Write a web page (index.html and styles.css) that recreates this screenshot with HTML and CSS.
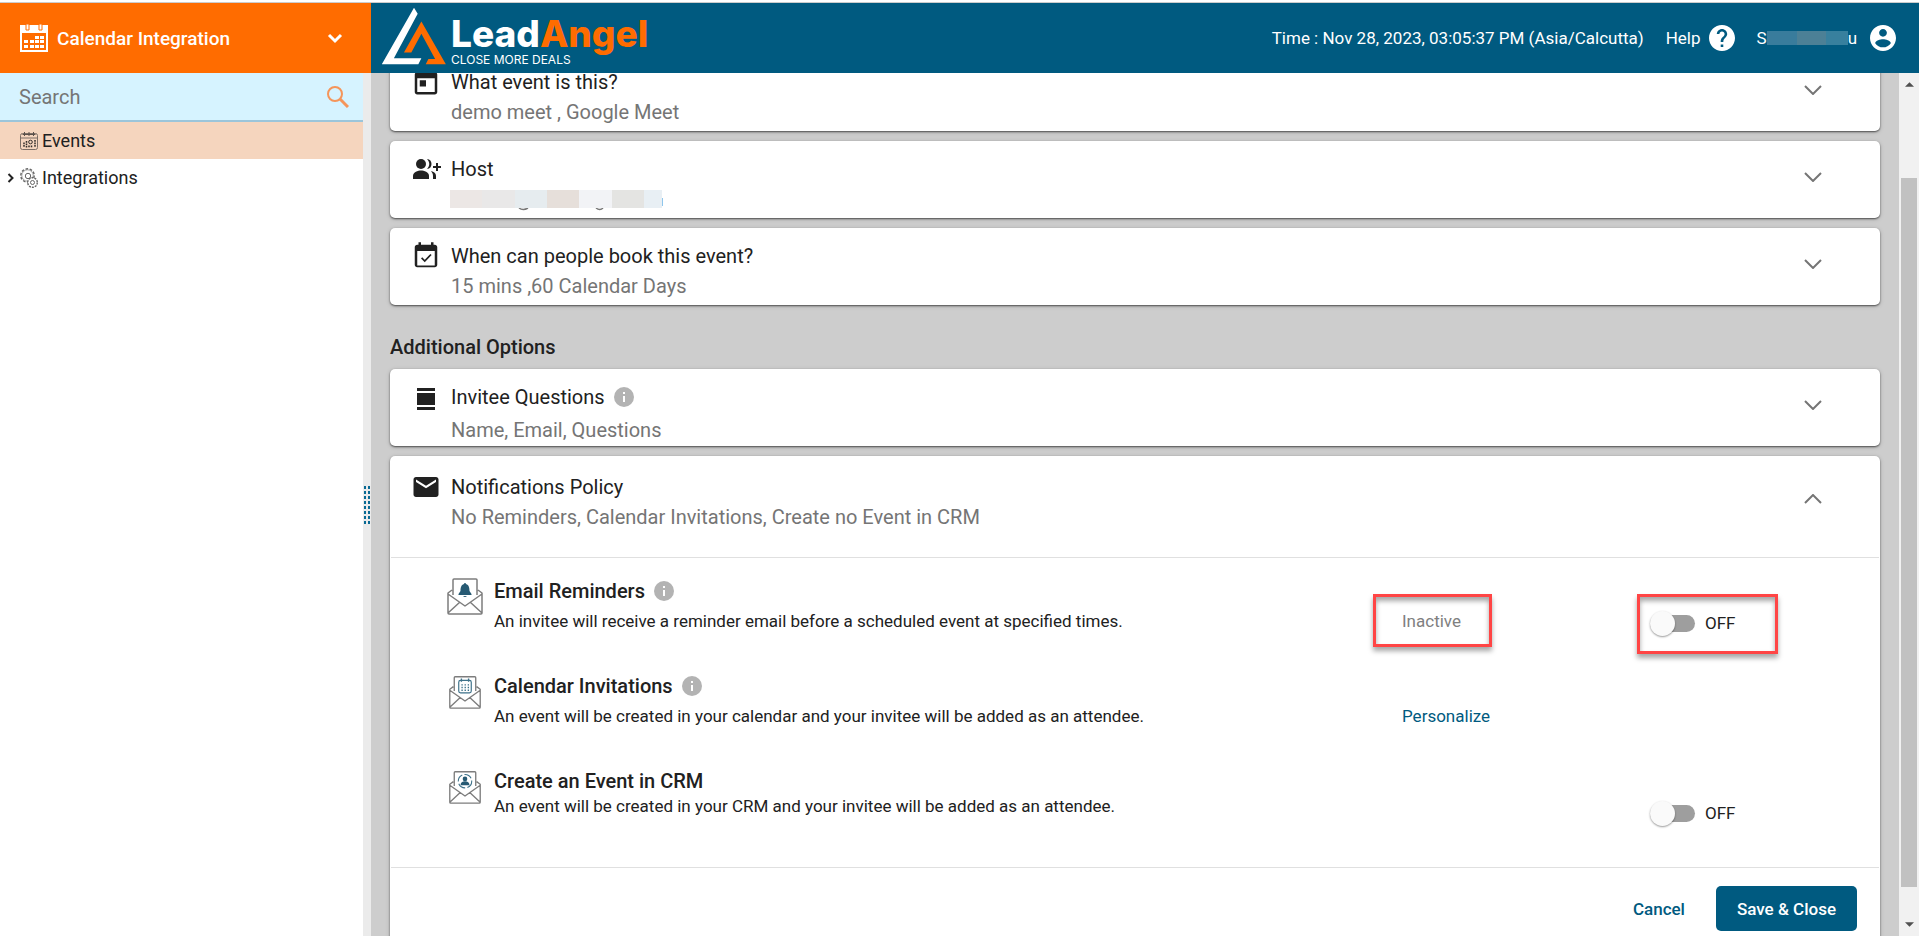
FILE: index.html
```html
<!DOCTYPE html>
<html lang="en">
<head>
<meta charset="utf-8">
<title>LeadAngel - Calendar Integration</title>
<link rel="stylesheet" href="styles.css">
</head>
<body>
<svg class="defs" aria-hidden="true">
  <symbol id="down" viewBox="0 0 18 10"><path d="M1 1l8 8 8-8" fill="none" stroke="currentColor" stroke-width="2"/></symbol>
  <symbol id="info" viewBox="0 0 20 20"><circle cx="10" cy="10" r="10" fill="#b3b3b3"/><path d="M9 5h2v2H9zM9 9h2v6H9z" fill="#fff"/></symbol>
  <symbol id="envelope" viewBox="0 0 38 38"><g fill="none" stroke="#7d7d7d" stroke-width="1.5" stroke-linejoin="round"><path d="M7 18V3q0-1 1-1h22q1 0 1 1v15M6 13l-4 3v20q0 1 1 1h32q1 0 1-1V16l-4-3M2 17l17 12 17-12M2 36l12-11M36 36L24 25"/></g></symbol>
</svg>
<header class="topbar">
  <button class="module" type="button">
    <svg class="module-icon" viewBox="0 0 28 28"><path d="M1 2h26v25H1z" fill="none" stroke="#fff" stroke-width="2"/><path d="M0 2h28v7H0z" fill="#fff"/><path d="M6 0h3v6H6zM19 0h3v6h-3z" fill="#fff" stroke="#ff6c00"/><path d="M15 12h4v3h-4zM20 12h4v3h-4zM4 16h4v3H4zM10 16h4v3h-4zM15 16h4v3h-4zM20 16h4v3h-4zM4 21h4v3H4zM10 21h4v3h-4zM15 21h4v3h-4zM20 21h4v3h-4z" fill="#fff"/></svg>
    <span>Calendar Integration</span>
    <svg class="module-arrow" viewBox="0 0 16 11"><path d="M2 2l6 6 6-6" fill="none" stroke="#fff" stroke-width="3"/></svg>
  </button>
  <div class="brandbar">
    <a class="logo" href="#" aria-label="LeadAngel">
      <svg class="logo-mark" viewBox="32 20 196 173"><path d="M130 22L34 191h109l9-18H70l71-133z" fill="#fff"/><path d="M152 63l73 128h-60l8-16h20l-41-75-30 56h-22z" fill="#ff6c00"/></svg>
      <span class="logo-text"><span class="logo-name">Lead<b>Angel</b></span><span class="logo-tag">CLOSE MORE DEALS</span></span>
    </a>
    <div class="account">
      <span>Time : Nov 28, 2023, 03:05:37 PM (Asia/Calcutta)</span>
      <a class="help" href="#">Help
        <svg class="round-icon" viewBox="2 2 20 20"><path fill="#fff" d="M12 2C6.480 2 2 6.480 2 12s4.480 10 10 10 10-4.480 10-10S17.520 2 12 2zm1 17h-2v-2h2v2zm2.070-7.750l-.9.920C13.450 12.900 13 13.500 13 15h-2v-.5c0-1.100.45-2.100 1.170-2.830l1.240-1.260c.37-.36.59-.86.59-1.410 0-1.100-.9-2-2-2s-2 .9-2 2H8c0-2.210 1.790-4 4-4s4 1.790 4 4c0 .88-.36 1.680-.93 2.250z"/></svg>
      </a>
      <a class="user" href="#"><span class="user-name">S<i class="user-mask"></i>u</span>
        <svg class="round-icon" viewBox="2 2 20 20"><path fill="#fff" d="M12 2C6.480 2 2 6.480 2 12s4.480 10 10 10 10-4.480 10-10S17.520 2 12 2zm0 3c1.660 0 3 1.340 3 3s-1.340 3-3 3-3-1.340-3-3 1.340-3 3-3zm0 14.200c-2.500 0-4.710-1.280-6-3.220.03-1.990 4-3.080 6-3.080 1.990 0 5.970 1.090 6 3.080-1.290 1.940-3.500 3.220-6 3.220z"/></svg>
      </a>
    </div>
  </div>
</header>
<div class="shell">
  <aside class="sidebar">
    <label class="search">
      <input type="search" placeholder="Search" aria-label="Search">
      <svg class="search-icon" viewBox="0 0 22 22"><circle cx="8" cy="8" r="7" fill="none" stroke="#f5955a" stroke-width="2"/><path d="M13 13l8 8" stroke="#f5955a" stroke-width="3"/></svg>
    </label>
    <nav>
      <a class="nav-item active" href="#">
        <span class="twisty"></span>
        <svg class="nav-icon" viewBox="0 0 18 18"><rect x=".5" y="1.500" width="17" height="16" rx="2" fill="none" stroke="#7d6f66"/><path d="M1 6h16" stroke="#7d6f66"/><path d="M4.500 0v4M9 0v4M13.500 0v4M2.500 2.500h13" stroke="#5a504a"/><path d="M4 10.500v5M6.500 9v6.500M9 13.500v2M11.500 13.500v2M15 8v7.500" stroke="#332e2a" stroke-width="1.500" stroke-dasharray="1.700 .8"/><circle cx="10.500" cy="10" r="1.800" fill="none" stroke="#332e2a"/></svg>
        Events</a>
      <a class="nav-item" href="#">
        <svg class="twisty" viewBox="0 0 8 12"><path d="M1 2l4 4-4 4" fill="none" stroke="#222" stroke-width="2"/></svg>
        <svg class="nav-icon" viewBox="0 0 18 20"><g fill="none" stroke="#666"><circle cx="7.500" cy="7.500" r="6.700" stroke-width="1.400" stroke-dasharray="2.600 1.600"/><circle cx="7.500" cy="7.500" r="5.700" stroke-width=".6"/><circle cx="8" cy="8" r="2.700"/><circle cx="12.500" cy="14.500" r="4.800" fill="#fff" stroke-width="1.400" stroke-dasharray="2 1"/><circle cx="12.500" cy="14.500" r="2"/></g></svg>
        Integrations</a>
    </nav>
  </aside>
  <div class="splitter"><span class="grip"></span></div>
  <main class="content">
    <section class="card">
      <svg class="card-icon" viewBox="0 0 24 24"><path fill="#212121" d="M19 4h-1V2h-2v2H8V2H6v2H5c-1.110 0-1.990.9-1.990 2L3 20c0 1.100.89 2 2 2h14c1.100 0 2-.9 2-2V6c0-1.100-.9-2-2-2zm0 16H5V9h14v11zM7 10.500h5v5H7z"/></svg>
      <div class="card-text"><h3>What event is this?</h3><p>demo meet , Google Meet</p></div>
      <button class="toggle-card" type="button" aria-label="Expand"><svg><use href="#down"/></svg></button>
    </section>
    <section class="card">
      <svg class="card-icon" viewBox="0 0 30 30"><g fill="#212121"><circle cx="10" cy="10" r="5"/><path d="M2 25v-3c0-4 5-5.500 8-5.500s8 1.500 8 5.500v3z"/><path d="M16 5c6 0 6 10 0 10 3-3 3-7 0-10zM20 17c4 1 5 3 5 5v3h-3v-3c0-2-.8-3.500-2-5zM25 9h2v3h3v2h-3v3h-2v-3h-3v-2h3z"/></g></svg>
      <div class="card-text"><h3>Host</h3>
        <svg class="host-mask" viewBox="0 0 214 22" role="img" aria-label="Hidden host address"><path d="M69 18q4 3 9 0M146 18q4 3 7 0" fill="none" stroke="#777" stroke-width="1.500"/><path d="M0 0h32v18H0z" fill="#ece7e5"/><path d="M32 0h33v18H32z" fill="#e9e8e8"/><path d="M65 0h32v18H65z" fill="#e6ecef"/><path d="M97 0h32v18H97z" fill="#e6dfda"/><path d="M129 0h33v18h-33z" fill="#f2f3f6"/><path d="M162 0h32v18h-32z" fill="#e4e4e2"/><path d="M194 0h18v18h-18z" fill="#e8eff4"/><path d="M212 8h1v8h-1z" fill="#8fc6ec"/></svg>
      </div>
      <button class="toggle-card" type="button" aria-label="Expand"><svg><use href="#down"/></svg></button>
    </section>
    <section class="card">
      <svg class="card-icon" viewBox="0 0 24 24"><path fill="#212121" d="M19 3h-1V1h-2v2H8V1H6v2H5c-1.110 0-2 .9-2 2v14c0 1.100.89 2 2 2h14c1.100 0 2-.9 2-2V5c0-1.100-.9-2-2-2zm0 16.500H5V8h14v11.500z"/><path d="M8.500 13.500l2.500 2.500 5-5.200" fill="none" stroke="#212121" stroke-width="1.400"/></svg>
      <div class="card-text"><h3>When can people book this event?</h3><p>15 mins ,60 Calendar Days</p></div>
      <button class="toggle-card" type="button" aria-label="Expand"><svg><use href="#down"/></svg></button>
    </section>
    <h2>Additional Options</h2>
    <section class="card">
      <svg class="card-icon" viewBox="0 0 30 30"><path fill="#212121" d="M6 6h18v3H6zM6 11h18v12H6zM6 25h18v3H6z"/></svg>
      <div class="card-text spaced"><h3>Invitee Questions <svg class="info"><use href="#info"/></svg></h3><p>Name, Email, Questions</p></div>
      <button class="toggle-card" type="button" aria-label="Expand"><svg><use href="#down"/></svg></button>
    </section>
    <section class="panel">
      <div class="panel-head">
        <svg class="card-icon" viewBox="0 0 24 24"><path fill="#212121" d="M20 4H4c-1.100 0-1.990.9-1.990 2L2 18c0 1.100.9 2 2 2h16c1.100 0 2-.9 2-2V6c0-1.100-.9-2-2-2zm0 4l-8 5-8-5V6l8 5 8-5v2z"/></svg>
        <div class="card-text"><h3>Notifications Policy</h3><p>No Reminders, Calendar Invitations, Create no Event in CRM</p></div>
        <button class="toggle-card open" type="button" aria-label="Collapse"><svg><use href="#down"/></svg></button>
      </div>
      <div class="options">
        <div class="option">
          <svg class="option-icon large" viewBox="0 0 38 38"><use href="#envelope"/><path fill="#275a73" d="M18 7q0-1 1-1t1 1c3 1 3.500 4 3.500 7l2 3v1h-13v-1l2-3c0-3 .5-6 3.500-7zM17 19h4q-2 2-4 0z"/></svg>
          <div class="option-text"><h4>Email Reminders <svg class="info"><use href="#info"/></svg></h4><p>An invitee will receive a reminder email before a scheduled event at specified times.</p></div>
          <div class="status"><span class="muted">Inactive</span><span class="mark mark-status"></span></div>
          <div class="switch-cell"><label class="switch"><input type="checkbox" role="switch"><span>OFF</span></label><span class="mark mark-switch"></span></div>
        </div>
        <div class="option">
          <svg class="option-icon" viewBox="0 0 38 38"><use href="#envelope"/><g fill="none" stroke="#3d7189"><rect x="12" y="6" width="14" height="14" rx="2" stroke-width="1.300"/><path d="M15 4v3.500M23 4v3.500" stroke-width="1.500"/><path d="M15 11h9M15 14h9M15 17h9" stroke-width="1.500" stroke-dasharray="1.500 2"/></g></svg>
          <div class="option-text"><h4>Calendar Invitations <svg class="info"><use href="#info"/></svg></h4><p>An event will be created in your calendar and your invitee will be added as an attendee.</p></div>
          <div class="status"><a href="#">Personalize</a></div>
        </div>
        <div class="option tight">
          <svg class="option-icon" viewBox="0 0 38 38"><use href="#envelope"/><circle cx="19" cy="12.500" r="7.500" fill="none" stroke="#3d7189" stroke-width="1.200" stroke-dasharray="9 2.500"/><circle cx="19" cy="10" r="2.600" fill="#275a73"/><path d="M14 17c0-3 2-4.500 5-4.500s5 1.500 5 4.500z" fill="#275a73"/></svg>
          <div class="option-text"><h4>Create an Event in CRM</h4><p>An event will be created in your CRM and your invitee will be added as an attendee.</p></div>
          <div class="status"></div>
          <div class="switch-cell"><label class="switch"><input type="checkbox" role="switch"><span>OFF</span></label></div>
        </div>
      </div>
      <div class="actions"><button class="cancel" type="button">Cancel</button><button class="save" type="button">Save &amp; Close</button></div>
    </section>
  </main>
  <div class="scrollbar" aria-hidden="true">
    <svg class="scroll-arrow" viewBox="0 0 8 4"><path d="M0 4l4-4 4 4z" fill="#505050"/></svg>
    <span class="thumb"></span>
    <svg class="scroll-arrow" viewBox="0 0 8 4"><path d="M0 0l4 4 4-4z" fill="#505050"/></svg>
  </div>
</div>
</body>
</html>
```

FILE: styles.css
```css
* { box-sizing: border-box; }
body {
  margin: 0;
  height: 100vh;
  padding-top: 2px;
  display: flex;
  flex-direction: column;
  overflow: hidden;
  font-family: Roboto, sans-serif;
  font-size: 17px;
  color: #212121;
  background: #fff;
}
h2, h3, h4, p { margin: 0; font-weight: 400; }
a { color: inherit; text-decoration: none; }
button { font: inherit; border: 0; background: none; padding: 0; cursor: pointer; }
svg { display: block; flex: none; }
.defs { position: absolute; width: 0; height: 0; }

/* Top bar */
.topbar { display: flex; height: 71px; flex: none; border-top: 1px solid #ccc; color: #fff; }
.module {
  width: 371px;
  padding: 0 28px 0 20px;
  display: flex;
  align-items: center;
  gap: 9px;
  background: #ff6c00;
  color: #fff;
  font-size: 19px;
  font-weight: 500;
}
.module-icon { width: 28px; height: 28px; }
.module-arrow { width: 16px; height: 11px; margin-left: auto; }
.brandbar {
  flex: 1;
  display: flex;
  align-items: center;
  justify-content: space-between;
  padding: 0 23px 0 10px;
  background: #005a80;
}
.logo { display: flex; align-items: flex-start; gap: 4px; height: 62px; }
.logo-mark { width: 66px; height: 58px; }
.logo-text { display: flex; flex-direction: column; padding-top: 7px; }
.logo-name { font: 800 37px/40px Inter, sans-serif; }
.logo-name b { color: #ff6c00; font-weight: 800; }
.logo-tag { font: 12px/12px Inter, sans-serif; }
.account { display: flex; align-items: center; gap: 22px; }
.help { display: flex; align-items: center; gap: 8px; }
.user { display: flex; align-items: center; gap: 13px; }
.user-name { display: flex; align-items: center; }
.user-mask { width: 81px; height: 14px; background: linear-gradient(90deg, #397c9c 0 37%, #4c8096 37% 73%, #38809e 73%); }
.round-icon { width: 26px; height: 26px; }

/* Page body */
.shell { flex: 1; display: flex; min-height: 0; }
.sidebar { width: 363px; flex: none; }
.search {
  display: flex;
  align-items: center;
  height: 49px;
  padding: 0 14px 0 19px;
  background: #d6f3ff;
  border-bottom: 2px solid #9bc5da;
}
.search input { flex: 1; min-width: 0; border: 0; padding: 0; outline: 0; background: none; font: 20px Roboto, sans-serif; color: #333; }
.search input::placeholder { color: #757575; opacity: 1; }
.search-icon { width: 22px; height: 22px; }
.nav-item { display: flex; align-items: center; gap: 4px; height: 37px; padding-left: 7px; font-size: 18px; }
.nav-item.active { background: #f5d5be; }
.twisty { width: 9px; height: 12px; }
.nav-icon { width: 18px; height: 20px; }
.splitter { width: 8px; flex: none; background: #ebebeb; display: flex; justify-content: center; align-items: center; }
.grip {
  width: 6px;
  height: 38px;
  background: repeating-linear-gradient(90deg, #0a6a94 0 2px, transparent 2px 4px);
  -webkit-mask: repeating-linear-gradient(#000 0 3px, transparent 3px 5px);
  mask: repeating-linear-gradient(#000 0 3px, transparent 3px 5px);
}
.content {
  flex: 1;
  min-width: 0;
  overflow: hidden;
  display: flex;
  flex-direction: column;
  gap: 10px;
  padding: 0 19px;
  background: #cdcdcd;
}
.content > * { flex: none; }
.content > :first-child { margin-top: -19px; }

/* Cards */
.card, .panel { background: #fff; border-radius: 5px; box-shadow: 0 1px 2px rgba(0, 0, 0, .6), 0 1px 5px rgba(0, 0, 0, .15); }
.card { height: 77px; }
.card, .panel-head { display: flex; align-items: flex-start; padding: 13px 58px 0 21px; gap: 10px; }
.card-icon { width: 30px; height: 30px; }
.card-text { flex: 1; line-height: 30px; font-size: 20px; }
.card-text h3, .option-text h4 { display: flex; align-items: center; gap: 9px; font-size: 20px; }
.card-text p { color: #757575; }
.card-text.spaced p { margin-top: 3px; }
.info { width: 20px; height: 20px; }
.host-mask { width: 214px; height: 22px; margin: 6px 0 0 -1px; }
.toggle-card { color: #757575; padding-top: 18px; }
.toggle-card svg { width: 18px; height: 10px; }
.toggle-card.open svg { transform: rotate(180deg); }
h2 { font-size: 20px; font-weight: 500; line-height: 24px; padding-top: 20px; }
.panel-head { padding-top: 16px; height: 101px; }
.panel-head .toggle-card { padding-top: 22px; }

/* Notification options */
.options { margin: 0 1px; padding: 18px 0 41px 55px; border: solid #e0e0e0; border-width: 1px 0; }
.option { display: grid; grid-template-columns: 38px 1fr 248px 229px; height: 95px; align-items: start; }
.option:last-child { height: 60px; }
.option-icon { width: 34px; height: 34px; margin: 4px 2px; }
.option-icon.large { width: 38px; height: 38px; margin: 1px 0; }
.option-text { padding-left: 10px; line-height: 30px; }
.option-text h4 { font-weight: 500; font-size: 20px; }
.tight .option-text p { line-height: 20px; }
.status, .switch-cell { position: relative; padding-top: 30px; line-height: 30px; }
.status a { color: #005a80; }
.muted { color: #808080; }
.mark { position: absolute; border: 3px solid #ff4545; box-shadow: 0 4px 5px rgba(0, 0, 0, .35), inset 0 4px 5px rgba(0, 0, 0, .35); pointer-events: none; }
.mark-status { left: -29px; top: 18px; width: 119px; height: 53px; }
.mark-switch { left: -13px; top: 18px; width: 141px; height: 60px; }
.switch { display: flex; align-items: center; gap: 10px; line-height: 34px; }
.switch input { appearance: none; width: 45px; height: 17px; margin: 0; border-radius: 9px; background: #9e9e9e; display: flex; align-items: center; }
.switch input::before { content: ""; width: 25px; height: 25px; flex: none; border-radius: 50%; background: #fafafa; box-shadow: 0 1px 2px rgba(0, 0, 0, .4); }
.actions { display: flex; justify-content: flex-end; align-items: center; gap: 31px; padding: 18px 23px; }
.cancel { color: #005a80; font-weight: 500; }
.save { height: 45px; padding: 0 21px; border-radius: 5px; background: #005a80; color: #fff; font-weight: 500; }

/* Scroll track */
.scrollbar { width: 20px; flex: none; background: #f1f1f1; display: flex; flex-direction: column; align-items: center; padding: 9px 0; }
.scroll-arrow { width: 9px; height: 5px; }
.thumb { flex: 1; width: 16px; margin: 91px 0 35px; background: #c1c1c1; }
```
